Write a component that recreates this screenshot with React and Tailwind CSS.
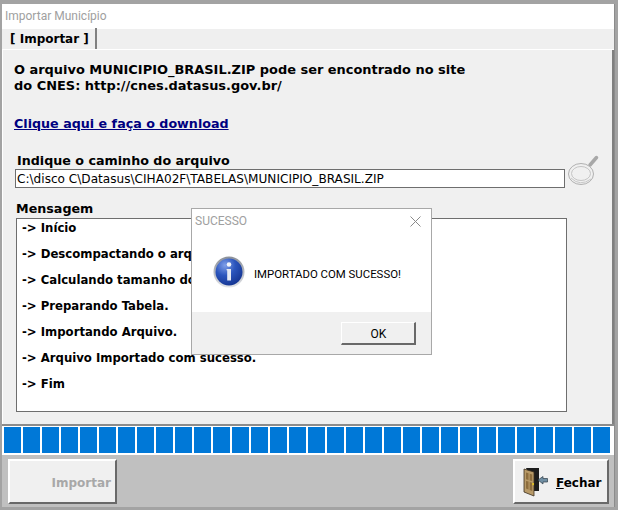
import React from 'react';

const boldFont = "font-['DejaVu_Sans',sans-serif] font-bold";
const uiFont = "font-['Roboto','Noto_Sans',sans-serif]";

const messages = [
    '-> Início',
    '-> Descompactando o arquivo',
    '-> Calculando tamanho do arquivo',
    '-> Preparando Tabela.',
    '-> Importando Arquivo.',
    '-> Arquivo Importado com sucesso.',
    '-> Fim',
];

const segments = Array.from({ length: 32 }, (_, i) => i);

// Lupa desabilitada ao lado do campo do caminho
const MagnifierIcon = () => (
    <svg width="34" height="34" viewBox="0 0 34 34" fill="none">
        <path d="M23 12 L29.5 4.5" stroke="#a8a8a8" strokeWidth="3.5" strokeLinecap="round" />
        <ellipse cx="14" cy="21" rx="12.5" ry="10.5" fill="#f0f0f0" stroke="#b0b0b0" strokeWidth="1" />
        <ellipse cx="14" cy="20.5" rx="9.5" ry="7" stroke="#c4c4c4" strokeWidth="1" />
        <path d="M4 25 Q13 34 24 26" stroke="#c8c8c8" strokeWidth="1" />
    </svg>
);

const InfoIcon = () => (
    <svg width="32" height="32" viewBox="0 0 32 32">
        <defs>
            <radialGradient id="infoBlue" cx="0.35" cy="0.25" r="0.85">
                <stop offset="0" stopColor="#7f9fe8" />
                <stop offset="0.45" stopColor="#2b55bd" />
                <stop offset="1" stopColor="#12308c" />
            </radialGradient>
            <linearGradient id="infoRing" x1="0" y1="0" x2="0" y2="1">
                <stop offset="0" stopColor="#8a8f98" />
                <stop offset="1" stopColor="#e2e4e8" />
            </linearGradient>
        </defs>
        <circle cx="16" cy="16" r="15.5" fill="url(#infoRing)" />
        <circle cx="16" cy="16" r="13.5" fill="url(#infoBlue)" />
        <circle cx="16" cy="8.5" r="2.3" fill="#f2f5fb" />
        <path d="M13.6 13 H18 V24.5 H14.2 V14.6 L13.6 14.3 Z" fill="#e6eaf3" />
    </svg>
);

const DoorIcon = () => (
    <svg width="26" height="30" viewBox="0 0 26 30">
        <path d="M3 1 H16 V24 H11 Z" fill="#1d1d1d" />
        <path d="M1 2 L11 5 V29 L1 25 Z" fill="#b89a68" stroke="#3a2f1e" strokeWidth="0.8" />
        <path d="M3 5.5 L5.5 6.2 V13 L3 12.3 Z M6.7 6.7 L9.2 7.4 V14 L6.7 13.4 Z M3 14 L5.5 14.6 V22.5 L3 21.6 Z M6.7 15 L9.2 15.7 V24 L6.7 23 Z" fill="#8d6d3d" />
        <rect x="9.4" y="16" width="1.4" height="2.2" fill="#f2d21a" />
        <path d="M15 13 L20 9.5 V11.5 H24.5 V15 H20 V17 Z" fill="#6f8ea3" stroke="#2f3d47" strokeWidth="0.7" />
    </svg>
);

const App = () => {
    return (
        <div className="relative w-[618px] h-[510px] overflow-hidden bg-[#a3a3a3] pt-[4px] pl-[2px] pr-[3px] pb-[3px]">
            <div className="flex flex-col h-full bg-[#f0f0f0] border-r border-[#8c8c8c]">
                {/* barra de título */}
                <div className={`h-[25px] shrink-0 bg-white pl-[3px] text-[12px] leading-[25px] text-[#a0a0a0] ${uiFont}`}>
                    Importar Município
                </div>

                {/* abas */}
                <div className="h-[21px] shrink-0 flex items-end pl-[2px] bg-[#efefef] border-b border-white">
                    <div className={`w-[93px] h-[21px] pl-[6px] border-r-2 border-[#808080] text-[12px] leading-[22px] text-black ${boldFont}`}>
                        [ Importar ]
                    </div>
                </div>

                {/* conteúdo */}
                <div className={`h-[374px] shrink-0 flex flex-col border-l border-white border-r-2 border-r-[#808080] text-[13px] text-black ${boldFont}`}>
                    <p className="pl-[11px] pt-[12px] text-[12.95px] leading-[16px]">
                        O arquivo MUNICIPIO_BRASIL.ZIP pode ser encontrado no site<br />do CNES: http://cnes.datasus.gov.br/
                    </p>
                    <a className="ml-[11px] mt-[22px] w-fit text-[12.7px] leading-[16px] text-[#000080] underline">Clique aqui e faça o download</a>

                    <label className="ml-[14px] mt-[21px] text-[12.7px] leading-[16px]">Indique o caminho do arquivo</label>
                    <div className="flex items-start ml-[12px]">
                        <div className="w-[550px] h-[19px] bg-white border border-[#6e6e6e] pl-[1px] font-['DejaVu_Sans',sans-serif] text-[12.1px] leading-[18px] font-normal">
                            C:\disco C\Datasus\CIHA02F\TABELAS\MUNICIPIO_BRASIL.ZIP
                        </div>
                        <div className="ml-[2px] -mt-[16px]"><MagnifierIcon /></div>
                    </div>

                    <label className="ml-[13px] mt-[13px] text-[12.7px] leading-[16px]">Mensagem</label>
                    <div className="ml-[13px] mt-[1px] w-[551px] h-[194px] bg-white border border-[#6e6e6e] pl-[5px] pt-[1px] text-[11.7px]">
                        {messages.map((line) => (
                            <div key={line} className="h-[26px] leading-[16px]">{line}</div>
                        ))}
                    </div>
                </div>

                {/* progresso */}
                <div className="h-[31px] shrink-0 flex gap-[2px] pl-[2px] pt-[1px] pb-[2px] bg-white border-t-2 border-[#8c8c8c]">
                    {segments.map((i) => (
                        <div key={i} className="w-[17px] h-full bg-[#0078d7]" />
                    ))}
                </div>

                {/* botões */}
                <div className="flex-1 flex justify-between items-start bg-[#c0c0c0] pl-[6px] pr-[5px] pt-[4px]">
                    <button className={`flex items-center justify-end w-[109px] h-[45px] pr-[4px] pt-[2px] bg-[#f0f0f0] border-2 border-t-white border-l-white border-r-[#696969] border-b-[#696969] text-[12px] text-[#a8a8a8] ${boldFont}`}>
                        Importar
                    </button>
                    <button className={`flex items-center w-[96px] h-[45px] pl-[8px] bg-[#f0f0f0] border-2 border-t-white border-l-white border-r-[#696969] border-b-[#696969] text-[12px] text-black ${boldFont}`}>
                        <DoorIcon />
                        <span className="ml-[7px] mt-[2px]"><span className="underline">F</span>echar</span>
                    </button>
                </div>
            </div>

            {/* caixa de mensagem */}
            <div className={`absolute left-[191px] top-[208px] flex flex-col w-[241px] h-[147px] bg-white border border-[#a8a8a8] ${uiFont}`}>
                <div className="flex justify-between items-center h-[24px] pl-[3px] pr-[10px] text-[12px] text-[#a0a0a0]">
                    <span>SUCESSO</span>
                    <svg width="11" height="11" viewBox="0 0 11 11" stroke="#8a8a8a" strokeWidth="1">
                        <path d="M0.5 0.5 L10.5 10.5 M10.5 0.5 L0.5 10.5" />
                    </svg>
                </div>
                <div className="flex-1 flex items-start pl-[21px] pt-[23px]">
                    <InfoIcon />
                    <span className="ml-[9px] mt-[10px] text-[11.4px] leading-[16px] text-black">IMPORTADO COM SUCESSO!</span>
                </div>
                <div className="h-[42px] flex justify-end items-start pt-[10px] pr-[15px] bg-[#f0f0f0]">
                    <button className="w-[75px] h-[23px] pl-[1px] pt-[1px] bg-[#f0f0f0] border-t border-l border-white border-r-2 border-b-2 border-r-[#696969] border-b-[#696969] text-[12px] leading-[18px] text-black">OK</button>
                </div>
            </div>
        </div>
    );
};

export default App;
